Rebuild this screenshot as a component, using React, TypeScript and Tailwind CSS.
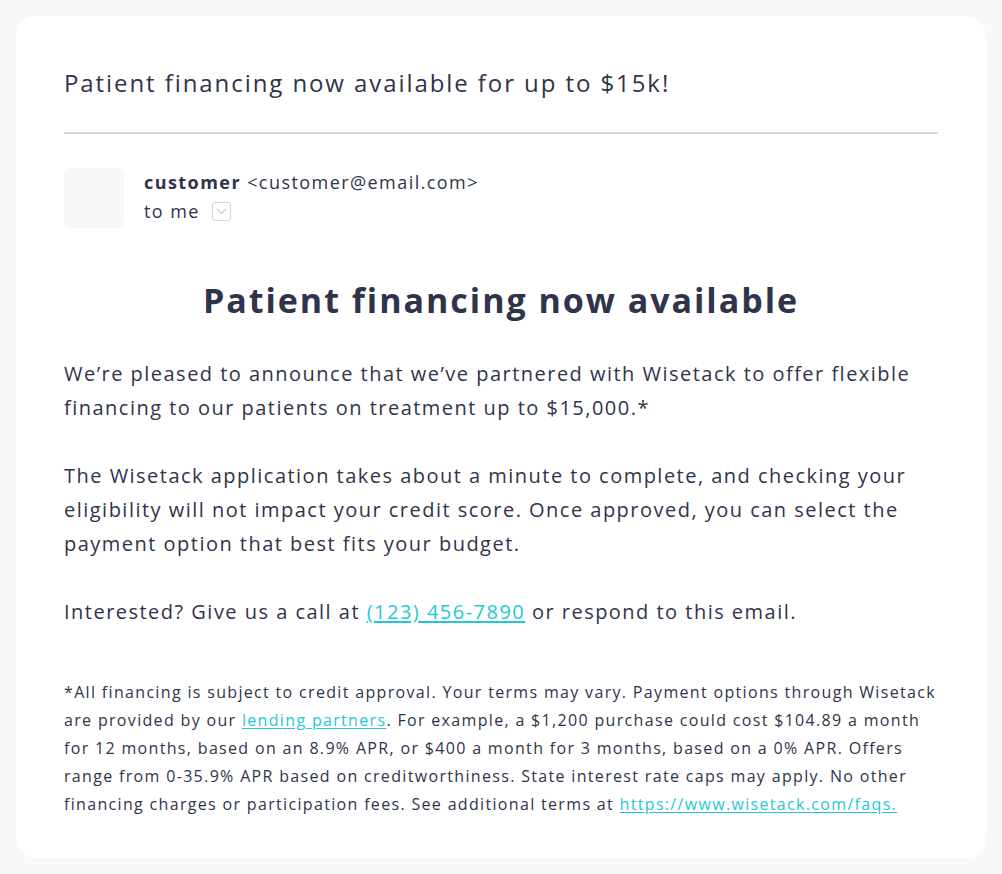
import React from "react";

export default function App() {
  return (
    <div
      className="min-h-[874px] w-full bg-[#f8f8f8] p-4 text-[#30344a]"
      style={{ fontFamily: '"Open Sans", "Liberation Sans", sans-serif' }}
    >
      <div className="rounded-[20px] bg-white px-12 pb-[40px] pt-[52px]">
        <h2 className="text-[24px] leading-[30px] tracking-[0.08em] text-[#30344a]">
          Patient financing now available for up to $15k!
        </h2>
        <div className="mt-[34px] h-[2px] bg-[#d6d7e0]" />
        <div className="mt-[34px] flex gap-5">
          <div className="h-[60px] w-[60px] rounded-md bg-[#f8f8f8]" />
          <div className="text-[18px] leading-[29px] tracking-[0.08em]">
            <div>
              <span className="font-bold">customer</span>{" "}
              <span>&lt;customer@email.com&gt;</span>
            </div>
            <div className="flex items-center gap-3">
              <span>to me</span>
              <span className="flex h-[19px] w-[19px] items-center justify-center rounded-[3px] border border-[#d3d4de]">
                <svg width="11" height="7" viewBox="0 0 11 7" fill="none">
                  <path d="M1 1l4.5 4.5L10 1" stroke="#c4c6d2" strokeWidth="1.2" />
                </svg>
              </span>
            </div>
          </div>
        </div>
        <h1 className="mt-[52px] text-center text-[34px] font-bold leading-[40px] tracking-[0.058em]">
          Patient financing now available
        </h1>
        <div className="mt-[37px] text-[20px] leading-[34px] tracking-[0.074em]">
          <p>
            We’re pleased to announce that we’ve partnered with Wisetack to offer flexible financing to our
            patients on treatment up to $15,000.*
          </p>
          <p className="mt-[34px]">
            The Wisetack application takes about a minute to complete, and checking your eligibility will not
            impact your credit score. Once approved, you can select the payment option that best fits your
            budget.
          </p>
          <p className="mt-[34px]">
            Interested? Give us a call at{" "}
            <a href="#" className="text-[#1fc8d4] underline underline-offset-2">
              (123) 456-7890
            </a>{" "}
            or respond to this email.
          </p>
        </div>
        <p className="mt-[49px] text-[16px] leading-[28px] tracking-[0.083em]">
          *All financing is subject to credit approval. Your terms may vary. Payment options through Wisetack
          are provided by our{" "}
          <a href="#" className="text-[#1fc8d4] underline underline-offset-2">
            lending partners
          </a>
          . For example, a $1,200 purchase could cost $104.89 a month for 12 months, based on an 8.9% APR, or
          $400 a month for 3 months, based on a 0% APR. Offers range from 0-35.9% APR based on
          creditworthiness. State interest rate caps may apply. No other financing charges or participation
          fees. See additional terms at{" "}
          <a href="#" className="text-[#1fc8d4] underline underline-offset-2">
            https://www.wisetack.com/faqs.
          </a>
        </p>
      </div>
    </div>
  );
}
